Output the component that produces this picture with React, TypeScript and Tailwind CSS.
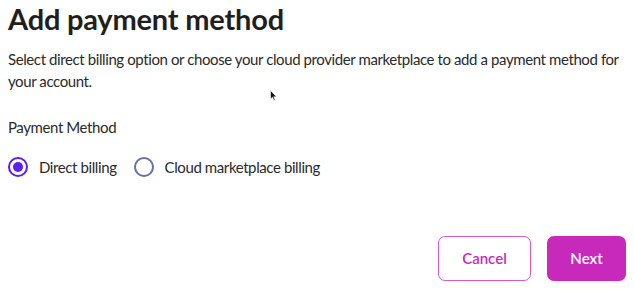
import React from "react";

export default function App() {
  return (
    <div
      className="relative w-[634px] h-[290px] bg-white text-[#222222] overflow-hidden"
      style={{ fontFamily: "Lato, 'Noto Sans', sans-serif" }}
    >
      <div className="px-2 pt-[1px]">
        <h1 className="text-[29px] leading-[35px] font-bold text-[#1f1f1f] tracking-[-0.2px]">Add payment method</h1>
        <p className="mt-[12px] text-[15px] leading-[22px] text-[#2a2a2a] w-[620px] tracking-[-0.4px]">
          Select direct billing option or choose your cloud provider marketplace to add a payment method for your account.
        </p>
        <div className="mt-[24px] text-[15px] leading-[22px] text-[#2a2a2a] tracking-[-0.4px]">Payment Method</div>
        <div className="mt-[18px] flex items-center text-[15px] text-[#2a2a2a] tracking-[-0.4px]">
          <label className="flex items-center">
            <span className="w-[20px] h-[20px] rounded-full border-2 border-[#5a1ff2] flex items-center justify-center">
              <span className="w-[10px] h-[10px] rounded-full bg-[#5a1ff2]" />
            </span>
            <span className="ml-[11px]">Direct billing</span>
          </label>
          <label className="flex items-center ml-[17px]">
            <span className="w-[20px] h-[20px] rounded-full border-2 border-[#6470ac]" />
            <span className="ml-[11px]">Cloud marketplace billing</span>
          </label>
        </div>
      </div>
      <div className="absolute left-[270px] top-[90px]">
        <svg width="8" height="12" viewBox="0 0 8 12">
          <path d="M0.5 0.5 L0.5 9 L2.5 7.2 L4 10.5 L5.2 10 L3.8 6.8 L6.5 6.8 Z" fill="#111" stroke="#fff" strokeWidth="0.6" />
        </svg>
      </div>
      <div className="absolute right-[8px] top-[236px] flex gap-4">
        <button className="w-[93px] h-[45px] rounded-[7px] border border-[#d35bce] text-[#c42cbb] text-[15px] font-semibold bg-white">
          Cancel
        </button>
        <button className="w-[79px] h-[45px] rounded-[7px] bg-[#c72abb] text-white text-[15px] font-semibold">
          Next
        </button>
      </div>
    </div>
  );
}
